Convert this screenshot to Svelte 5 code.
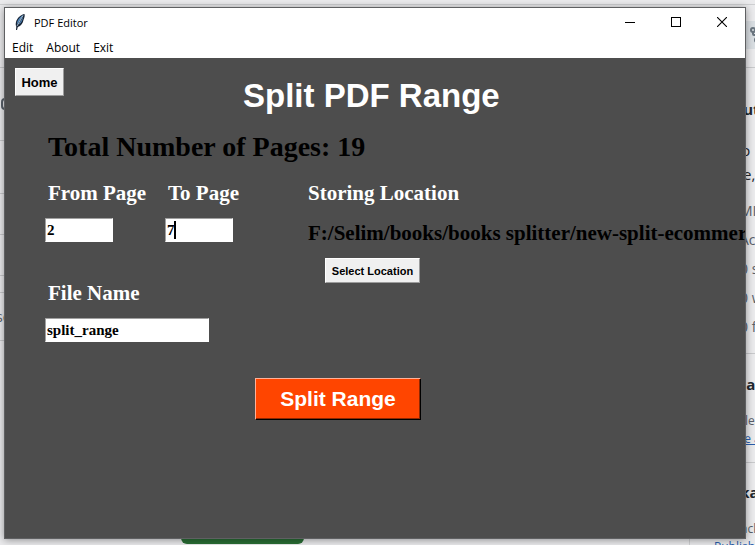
<script>
  let fromPage = $state('2');
  let toPage = $state('7');
  let fileName = $state('split_range');
  const totalPages = 19;
  const location = 'F:/Selim/books/books splitter/new-split-ecommerce';
  const stats = ['MIT license', 'Activity', '0 stars', '0 watching', '0 forks'];
</script>

<div class="desktop">
  <div class="page" aria-hidden="true">
    <div class="tabs"></div>
    <div class="toolbar">
      <span class="fork">
        <svg width="16" height="16" viewBox="0 0 16 16" fill="none" stroke="#6b7680" stroke-width="2">
          <circle cx="4" cy="3" r="2" /><circle cx="12" cy="3" r="2" /><circle cx="8" cy="13" r="2" />
          <path d="M4 5v2q0 1 1 1h6q1 0 1-1V5M8 8v3" />
        </svg>
      </span>
    </div>
    <div class="columns">
      <div class="files">
        <div class="row r73"><svg width="10" height="12" viewBox="0 0 10 12" fill="none" stroke="#59616a" stroke-width="2"><path d="M10 1H5Q2 1 2 4v4q0 3 3 3h5" /></svg></div>
        <div class="row r53"></div>
        <div class="row r41"></div>
        <div class="row r41"></div>
        <div class="row r17"></div>
        <div class="row r48">se</div>
        <div class="rest"><span class="green"></span></div>
      </div>
      <div class="side">
        <section class="about">
          <h2>About</h2>
          <p class="desc">A mo<br />more,</p>
          <ul>
            {#each stats as s}<li>{s}</li>{/each}
          </ul>
        </section>
        <section class="releases">
          <h2>Releases</h2>
          <p>No releases published</p>
          <span class="link under">Create a new release</span>
        </section>
        <section class="packages">
          <h2>Packages</h2>
          <p>No packages published</p>
          <span class="link">Publish your first package</span>
        </section>
      </div>
    </div>
  </div>

  <main class="window">
    <header class="titlebar">
      <svg class="feather" width="14" height="18" viewBox="0 0 14 18">
        <path d="M11.5 1C8 1.500 4 5 3 9c-.5 2-.3 3.500.3 4.500L3 17h1l.8-3C8 13 10 10 10.500 7 11.500 4.500 12 3 11.500 1z" fill="#172435" />
        <path d="M10.500 2C8 3 5 6 4.200 9L4 11.500 7 7zM10.300 4L5.500 11.500C8 10.500 9.600 7.500 10.300 4z" fill="#4f86bb" />
        <path d="M10 2.500L4 13" stroke="#c4d9eb" stroke-width=".8" />
      </svg>
      <span class="caption">PDF Editor</span>
      <button class="ctl" aria-label="Minimize"><svg width="10" height="10" shape-rendering="crispEdges"><path d="M0 5.500h10" stroke="#000" /></svg></button>
      <button class="ctl" aria-label="Maximize"><svg width="10" height="10" shape-rendering="crispEdges"><path d="M.5.500h9v9h-9z" fill="none" stroke="#000" /></svg></button>
      <button class="ctl" aria-label="Close"><svg width="10" height="10"><path d="M0 0l10 10M10 0L0 10" stroke="#000" stroke-width="1.100" /></svg></button>
    </header>
    <nav class="menu">
      <button>Edit</button>
      <button>About</button>
      <button>Exit</button>
    </nav>
    <div class="client">
      <div class="head">
        <button class="tk home">Home</button>
        <h1>Split PDF Range</h1>
      </div>
      <p class="total">Total Number of Pages: {totalPages}</p>
      <div class="form">
        <div class="field">
          <label for="from">From Page</label>
          <input id="from" class="num" bind:value={fromPage} />
        </div>
        <div class="field">
          <label for="to">To Page</label>
          <div class="entry">
            <input id="to" class="num" bind:value={toPage} />
            <span class="caret"></span>
          </div>
        </div>
        <div class="field store">
          <span class="label">Storing Location</span>
          <span class="label path">{location}</span>
          <button class="tk select">Select Location</button>
        </div>
        <div class="field file">
          <label for="name">File Name</label>
          <input id="name" class="name" bind:value={fileName} />
        </div>
      </div>
      <button class="split">Split Range</button>
    </div>
  </main>
</div>

<style>
  :global(body) { margin: 0; }
  * { box-sizing: border-box; }
  h1, h2, p, ul { margin: 0; padding: 0; font-weight: inherit; }
  button { font: inherit; color: inherit; margin: 0; padding: 0; border: 0; background: none; }
  .desktop {
    position: relative;
    height: 100vh;
    overflow: hidden;
    background: #ebebed;
    font-family: "Open Sans", "Noto Sans", sans-serif;
  }

  .page { height: 100%; color: #59616a; font-size: 14px; }
  .tabs { height: 5px; border-bottom: 1px solid #cfd0d2; }
  .toolbar { height: 63px; padding-top: 16px; border-bottom: 1px solid #c9cacc; }
  .fork { display: flex; align-items: center; justify-content: flex-end; height: 28px; width: 100%; background: linear-gradient(90deg, transparent 70%, #d9dee2 70%); }
  .fork svg { margin-right: -10px; }
  .columns { display: flex; height: 100%; }
  .files { flex: 1; }
  .row { display: flex; align-items: center; border-bottom: 1px solid #c9cacc; overflow: hidden; margin-left: -4px; }
  .row svg { margin-left: 4px; }
  .r73 { height: 73px; }
  .r53 { height: 53px; }
  .r41 { height: 41px; }
  .r17 { height: 17px; }
  .r48 { height: 48px; }
  .rest { padding: 171px 0 0 181px; }
  .green { display: block; width: 123px; height: 32px; border-radius: 6px; background: #2a6f35; }
  .side { width: 66px; padding-left: 25px; border-left: 1px solid #d0d1d3; white-space: nowrap; overflow: hidden; }
  .side section { border-bottom: 1px solid #c9cacc; margin-left: -1px; }
  .side h2 { font-size: 15px; line-height: 24px; font-weight: 700; color: #22272e; }
  .about { height: 286px; padding-top: 29px; }
  .desc { padding-top: 17px; font-size: 15px; line-height: 24px; color: #22272e; }
  .side ul { list-style: none; padding: 10px 0 0 26px; line-height: 29px; }
  .releases { height: 109px; padding-top: 18px; }
  .packages { height: 109px; padding-top: 17px; }
  .side section > p:not(.desc) { padding-top: 16px; font-size: 12px; line-height: 18px; }
  .link { display: block; font-size: 12px; line-height: 18px; color: #2a5fae; }
  .under { text-decoration: underline; }

  .window {
    position: absolute;
    inset: 7px 9px 6px 4px;
    display: flex;
    flex-direction: column;
    overflow: hidden;
    border: 1px solid #5f6062;
    background: #fff;
    box-shadow: 0 1px 8px rgba(0, 0, 0, .4);
    color: #000;
  }
  .titlebar { display: flex; align-items: center; height: 30px; padding: 0 0 2px 8px; }
  .feather { margin-right: 7px; }
  .caption { flex: 1; font-size: 11px; }
  .ctl { display: flex; align-items: center; justify-content: center; width: 46px; height: 28px; }
  .menu { display: flex; gap: 13px; height: 20px; padding: 0 7px; font-size: 12px; line-height: 20px; }
  .client { flex: 1; padding: 10px; background: #4d4d4d; font-weight: 700; font-family: "Liberation Serif", serif; }
  .head { display: flex; align-items: flex-start; }
  h1 { margin: 9px 0 0 179px; color: #fff; font: 700 33px/38px "Liberation Sans", sans-serif; white-space: nowrap; }
  .tk {
    border: 1px solid;
    border-color: #fff #9c9c9c #9c9c9c #fff;
    background: #f0f0f0;
    font-family: "Liberation Sans", sans-serif;
    font-weight: 700;
  }
  .home { width: 49px; height: 28px; font-size: 13px; }
  .total { padding: 17px 0 0 33px; font-size: 28px; line-height: 30px; }
  .form { display: grid; grid-template-columns: 120px 140px 1fr; row-gap: 39px; padding: 19px 0 0 30px; }
  .field { display: flex; flex-direction: column; align-items: flex-start; gap: 13px; }
  label, .label { padding-left: 3px; color: #fff; font-size: 21px; line-height: 24px; white-space: nowrap; }
  .label.path { color: #000; }
  .store { grid-column: 3; grid-row: 1 / 3; width: 0; gap: 16px; }
  .store .select { flex: none; width: 95px; height: 25px; margin: -3px 0 0 20px; font-size: 11px; white-space: nowrap; }
  .file { grid-column: 1 / 3; }
  .entry { position: relative; display: flex; }
  input {
    height: 24px;
    padding: 0 1px;
    border: 1px solid;
    border-color: #a0a0a0 #fff #fff #a0a0a0;
    border-radius: 0;
    background: #fff;
    color: #000;
    font: 700 15px "Liberation Serif", serif;
    outline: none;
  }
  .num { width: 68px; }
  .name { width: 164px; }
  .caret { position: absolute; left: 9px; top: 3px; width: 2px; height: 18px; background: #000; }
  .split {
    display: block;
    width: 166px;
    height: 42px;
    margin: 36px 0 0 240px;
    border: 1px solid;
    border-color: #ffb199 #000 #000 #ffb199;
    background: #ff4500;
    box-shadow: inset -1px -1px #8f2700;
    color: #fff;
    font: 700 21px "Liberation Sans", sans-serif;
  }
</style>
